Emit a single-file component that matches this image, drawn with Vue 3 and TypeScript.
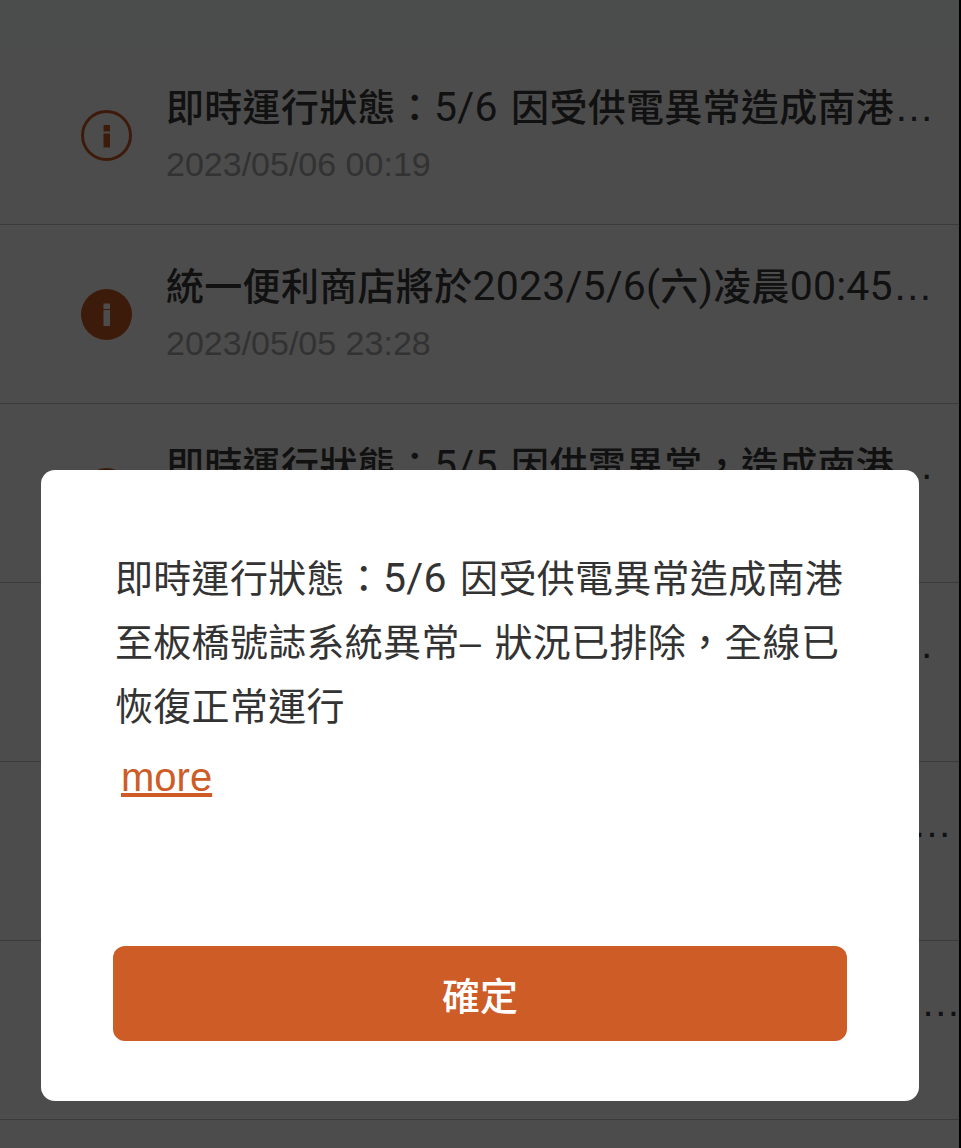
<script setup lang="ts">
interface Notice {
  title: string
  time: string
  read: boolean
}

interface Segment {
  text: string
  latin: boolean
}

const notices: Notice[] = [
  { title: '即時運行狀態：5/6 因受供電異常造成南港至板橋號誌系統異常– 狀況已排除', time: '2023/05/06 00:19', read: true },
  { title: '統一便利商店將於2023/5/6(六)凌晨00:45起暫停服務', time: '2023/05/05 23:28', read: false },
  { title: '即時運行狀態：5/5 因供電異常，造成南港至板橋號誌系統異常', time: '2023/05/05 22:10', read: false },
  { title: '即時運行狀態：5/5 因供電異常，造成南港至板橋號誌系統異常', time: '2023/05/05 21:42', read: false },
  { title: '統一便利商店及全家超商將於本週日凌晨12:30起暫停服務', time: '2023/05/04 23:30', read: false },
  { title: '公告(4) 統一便利商店及全家超商將於本週日凌晨暫停服務', time: '2023/05/03 23:15', read: false },
  { title: '即時運行狀態：5/3 全線恢復正常運行', time: '2023/05/03 08:05', read: false }
]

const message = '即時運行狀態：5/6 因受供電異常造成南港至板橋號誌系統異常– 狀況已排除，全線已恢復正常運行'

// Latin runs use a wider face than the CJK text around them, as in the reference.
function split(text: string): Segment[] {
  return text
    .split(/([\x20-\x7E]+)/)
    .filter((part) => part.length > 0)
    .map((part) => ({ text: part, latin: /^[\x20-\x7E]+$/.test(part) }))
}
</script>

<template>
  <div class="page">
    <div class="screen">
      <div class="topbar"></div>
      <ul class="list">
        <li v-for="n in notices" :key="n.time" class="row">
          <svg class="icon" viewBox="0 0 51 51" aria-hidden="true">
            <template v-if="n.read">
              <circle cx="25.5" cy="25.5" r="24" fill="none" stroke="#cd5c27" stroke-width="3" />
              <rect x="22.5" y="15" width="6.5" height="6.5" fill="#cd5c27" />
              <rect x="22.5" y="23.5" width="6.5" height="14" fill="#cd5c27" />
            </template>
            <template v-else>
              <circle cx="25.5" cy="25.5" r="25.5" fill="#cd5c27" />
              <rect x="22.5" y="14.5" width="6.5" height="5.5" fill="#fff" />
              <rect x="22.5" y="21" width="6.5" height="16" fill="#fff" />
            </template>
          </svg>
          <div class="text">
            <p class="title"><span v-for="(s, i) in split(n.title)" :key="i" :class="s.latin ? 'latin' : 'cjk'">{{ s.text }}</span></p>
            <p class="time">{{ n.time }}</p>
          </div>
        </li>
      </ul>
    </div>

    <div class="overlay">
      <div class="modal">
        <div class="message">
          <p class="body"><span v-for="(s, i) in split(message)" :key="i" :class="s.latin ? 'latin' : 'cjk'">{{ s.text }}</span></p>
          <a class="more" href="#">more</a>
        </div>
        <button class="confirm" type="button">確定</button>
      </div>
    </div>
  </div>
</template>

<style scoped>
.page {
  position: relative;
  width: 961px;
  height: 1148px;
  overflow: hidden;
  background: #000;
  font-family: "Liberation Sans", "Noto Sans CJK TC", sans-serif;
}
.screen {
  width: 959px;
  height: 100%;
  background: #fff;
}
.topbar {
  height: 46px;
  background: #fafefd;
}
.list {
  list-style: none;
  margin: 0;
  padding: 0;
}
.row {
  display: flex;
  align-items: center;
  gap: 34px;
  height: 179px;
  box-sizing: border-box;
  padding: 0 0 0 81px;
  border-bottom: 1px solid #c4c4c4;
}
.icon {
  flex: none;
  width: 51px;
  height: 51px;
}
.text {
  flex: 1;
  min-width: 0;
  margin-right: -4px;
  padding-bottom: 3px;
}
.title {
  margin: 0;
  font-size: 40px;
  font-weight: 500;
  line-height: 52px;
  color: #3a3a3a;
  white-space: nowrap;
  overflow: hidden;
  text-overflow: ellipsis;
}
.cjk {
  font-size: 38px;
  line-height: 1;
  letter-spacing: 0.3px;
}
.latin {
  font-family: Roboto, "Liberation Sans", sans-serif;
  font-size: 41px;
  font-weight: 400;
  line-height: 1;
  letter-spacing: 0.2px;
  word-spacing: 3px;
}
.time {
  margin: 9px 0 0;
  font-size: 34px;
  line-height: 44px;
  color: #a8a8a8;
}
.overlay {
  position: absolute;
  inset: 0;
  background: rgba(0, 0, 0, 0.7);
}
.modal {
  position: absolute;
  left: 41px;
  top: 470px;
  width: 878px;
  height: 631px;
  box-sizing: border-box;
  padding: 77px 72px 60px;
  display: flex;
  flex-direction: column;
  justify-content: space-between;
  background: #fff;
  border-radius: 14px;
}
.message {
  padding-left: 2px;
}
.body {
  margin: 0;
  font-size: 38px;
  line-height: 64px;
  color: #333;
}
.more {
  display: inline-block;
  margin: 15px 0 0 6px;
  font-size: 40px;
  line-height: 46px;
  color: #cd5c27;
  text-decoration: underline;
}
.confirm {
  height: 95px;
  border: 0;
  border-radius: 12px;
  background: #cd5c27;
  color: #fff;
  font-family: inherit;
  font-size: 38px;
  font-weight: 500;
}
</style>
